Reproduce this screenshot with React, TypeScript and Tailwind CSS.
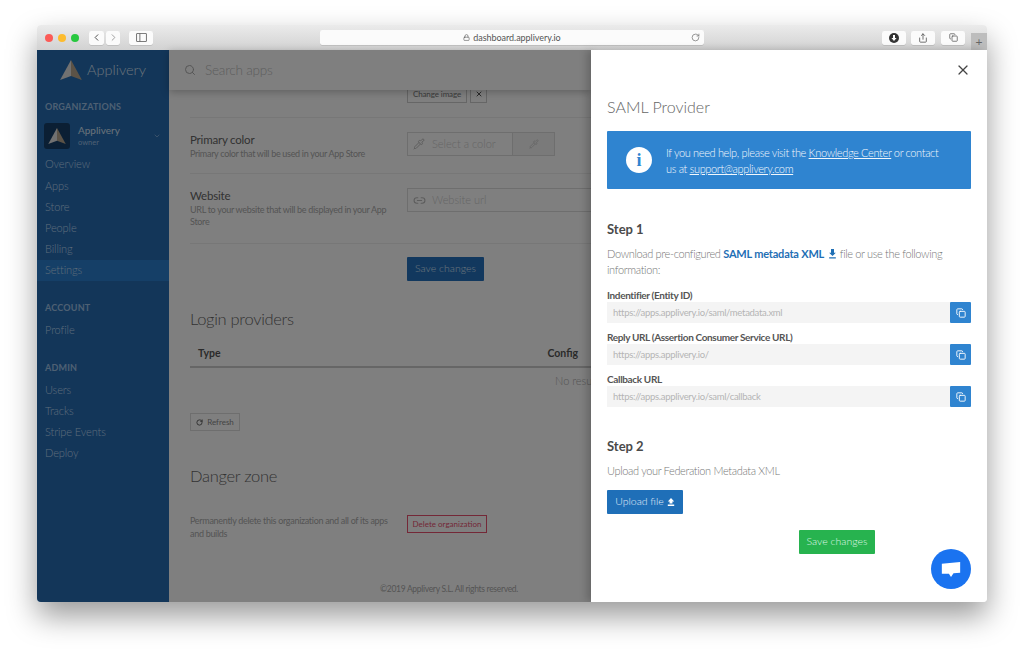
import { ChevronDown, ChevronLeft, ChevronRight, Copy, Link2, Lock, Pipette, RotateCw, Search, Share, X } from 'lucide-react';

const Logo = ({ className }: { className: string }) => (
  <svg viewBox="0 0 24 22" className={className}>
    <path d="M12 0 L0 22 L12 17.5 Z" fill="#e2e2e2" />
    <path d="M12 0 L24 22 L12 17.5 Z" fill="#b9a78e" />
  </svg>
);

const NavItem = ({ label, active }: { label: string; active?: boolean }) => (
  <div className={`flex h-[21.2px] items-center pl-2 text-[11px] font-light tracking-[-0.1px] text-[#bcd8f2] ${active ? 'bg-[#2b7fce]' : ''}`}>{label}</div>
);

const NavTitle = ({ label, className }: { label: string; className: string }) => (
  <div className={`pl-2 text-[9px] font-bold uppercase leading-[12px] tracking-[0.2px] text-[#9cc0e6] ${className}`}>{label}</div>
);

const DownIcon = () => (
  <svg viewBox="0 0 10 12" className="ml-1 inline-block h-[10px] w-[9px] align-[-1px]" fill="#1f6fb5">
    <path d="M3.2 0h3.6v4.5H9L5 8.5 1 4.5h2.2zM1 10h8v1.4H1z" />
  </svg>
);

const Field = ({ label, value }: { label: string; value: string }) => (
  <div className="mb-[7px]">
    <div className="h-[14px] text-[10px] font-bold leading-[15px] tracking-[-0.35px] text-[#555]">{label}</div>
    <div className="flex h-[21px]">
      <div className="flex flex-1 items-center bg-[#f4f4f4] pl-[6px] pt-[1px] text-[9.5px] tracking-[-0.3px] text-[#b4b4b4]">{value}</div>
      <div className="flex w-[21px] items-center justify-center rounded-[1px] bg-[#2f84d0]">
        <Copy className="h-[10px] w-[10px] text-white" strokeWidth={2.2} />
      </div>
    </div>
  </div>
);

function Sidebar() {
  return (
    <div className="flex w-[132px] shrink-0 flex-col bg-[#266cb2]">
      <div className="flex h-[40px] items-center pl-[23px]">
        <Logo className="h-[20px] w-[22px]" />
        <span className="ml-[5px] text-[14.5px] font-light text-[#d5e4f2]">Applivery</span>
      </div>
      <NavTitle label="Organizations" className="mt-[11px]" />
      <div className="mt-[10px] flex h-[26px] items-center pl-[7px] pr-[8px]">
        <div className="flex h-[26px] w-[26px] items-center justify-center rounded-[3px] bg-[#173f69]">
          <Logo className="h-[16px] w-[18px]" />
        </div>
        <div className="ml-[8px] flex-1">
          <div className="text-[10px] leading-[13px] text-[#d5e4f2]">Applivery</div>
          <div className="text-[7.5px] leading-[12px] text-[#9cc0e6]">owner</div>
        </div>
        <ChevronDown className="h-[8px] w-[8px] text-[#9cc0e6]" />
      </div>
      <div className="mt-[5px]">
        {['Overview', 'Apps', 'Store', 'People', 'Billing'].map(l => <NavItem key={l} label={l} />)}
        <NavItem label="Settings" active />
      </div>
      <NavTitle label="Account" className="mt-[21px]" />
      <div className="mt-[6px]"><NavItem label="Profile" /></div>
      <NavTitle label="Admin" className="mt-[21px]" />
      <div className="mt-[5px]">
        {['Users', 'Tracks', 'Stripe Events', 'Deploy'].map(l => <NavItem key={l} label={l} />)}
      </div>
    </div>
  );
}

function MainContent() {
  return (
    <div className="flex min-w-0 flex-1 flex-col bg-white">
      <div className="z-10 flex h-[40px] shrink-0 items-center bg-white pl-[15px] shadow-[0_2px_8px_rgba(0,0,0,0.25)]">
        <Search className="h-[12px] w-[12px] text-[#aaa]" />
        <span className="ml-[9px] text-[13.5px] font-light tracking-[-0.2px] text-[#bbb]">Search apps</span>
      </div>
      <div className="min-h-0 flex-1 overflow-hidden pl-[21px]">
        <div className="ml-[217px] flex h-[13px] items-end gap-[3px]">
          <div className="flex h-[18px] w-[60px] shrink-0 items-center justify-center border border-[#ccc] text-[8px] tracking-[-0.1px] text-[#777]">Change image</div>
          <div className="flex h-[18px] w-[17px] shrink-0 items-center justify-center border border-[#ccc]"><X className="h-[8px] w-[8px] text-[#555]" strokeWidth={3} /></div>
        </div>
        <div className="mt-[14px] flex h-[56px] border-t border-[#eee] pt-[14px]">
          <div className="w-[217px] shrink-0">
            <div className="text-[11.5px] leading-[16px] tracking-[-0.2px] text-[#666]">Primary color</div>
            <div className="text-[9px] leading-[12px] tracking-[-0.3px] text-[#aaa]">Primary color that will be used in your App Store</div>
          </div>
          <div className="flex h-[24px] w-[148px] border border-[#ddd]">
            <div className="flex flex-1 items-center pl-[5px] text-[11px] font-light text-[#ccc]">
              <Pipette className="mr-[7px] h-[12px] w-[12px] text-[#bbb]" />Select a color
            </div>
            <div className="flex w-[42px] items-center justify-center border-l border-[#ddd] bg-[#f4f4f4]"><Pipette className="h-[10px] w-[10px] text-[#ccc]" /></div>
          </div>
        </div>
        <div className="flex h-[70px] border-t border-[#eee] pt-[14px]">
          <div className="w-[217px] shrink-0 pr-[4px]">
            <div className="text-[11.5px] leading-[16px] tracking-[-0.2px] text-[#666]">Website</div>
            <div className="text-[9px] leading-[12px] tracking-[-0.3px] text-[#aaa]">URL to your website that will be displayed in your App Store</div>
          </div>
          <div className="flex h-[24px] flex-1 items-center border border-r-0 border-[#ddd] pl-[5px] text-[11px] font-light text-[#ccc]">
            <Link2 className="mr-[6px] h-[13px] w-[13px] text-[#bbb]" />Website url
          </div>
        </div>
        <div className="border-t border-[#eee] pl-[217px] pt-[13px]">
          <div className="flex h-[24px] w-[77px] items-center justify-center rounded-[1px] bg-[#2570bd] text-[10.5px] font-light text-[#d6e6f6]">Save changes</div>
        </div>
        <div className="mt-[26px] text-[16.5px] font-light leading-[24px] tracking-[-0.3px] text-[#666]">Login providers</div>
        <div className="mt-[10px] flex h-[27px] items-center justify-between border-b-2 border-[#ccc] pl-[8px] text-[10.5px] font-bold text-[#555]">
          <span>Type</span>
          <span className="mr-[13px]">Config</span>
        </div>
        <div className="mt-[6px] h-[14px] overflow-hidden whitespace-nowrap pl-[365px] text-[11px] font-light leading-[14px] text-[#aaa]">No results</div>
        <div className="mt-[25px] flex h-[18px] w-[50px] items-center justify-center gap-[4px] border border-[#ddd] text-[8px] text-[#888]">
          <RotateCw className="h-[7px] w-[7px] text-[#555]" strokeWidth={3} />Refresh
        </div>
        <div className="mt-[33px] text-[16.5px] font-light leading-[24px] tracking-[-0.3px] text-[#666]">Danger zone</div>
        <div className="mt-[27px] flex">
          <div className="w-[217px] shrink-0 pr-[10px] text-[9px] leading-[12.5px] tracking-[-0.3px] text-[#aaa]">Permanently delete this organization and all of its apps and builds</div>
          <div className="flex h-[18px] w-[80px] items-center justify-center border border-[#e8506f] text-[8px] text-[#e8506f]">Delete organization</div>
        </div>
        <div className="mt-[43px] whitespace-nowrap pl-[190px] text-[8.5px] leading-[12px] tracking-[-0.3px] text-[#aaa]">©2019 Applivery S.L. All rights reserved.</div>
      </div>
    </div>
  );
}

function SamlPanel() {
  return (
    <div className="relative w-[396px] shrink-0 bg-white px-[16px] shadow-[-4px_0_8px_rgba(0,0,0,0.2)]">
      <div className="flex h-[40px] items-center justify-end">
        <X className="h-[16px] w-[16px] text-[#444]" strokeWidth={1.8} />
      </div>
      <div className="mt-[6px] text-[16px] font-light leading-[22px] text-[#666]">SAML Provider</div>
      <div className="mt-[13px] flex h-[58px] items-center rounded-[1px] bg-[#2f84d0] pl-[19px]">
        <div className="flex h-[26px] w-[26px] shrink-0 items-center justify-center rounded-full bg-white font-['Liberation_Serif',serif] text-[18px] font-bold text-[#2f84d0]">i</div>
        <div className="ml-[14px] w-[284px] pt-[2px] text-[11px] font-light leading-[16px] tracking-[-0.35px] text-[#f2f7fc]">
          If you need help, please visit the <span className="underline">Knowledge Center</span> or contact us at <span className="underline">support@applivery.com</span>
        </div>
      </div>
      <div className="mt-[31px] text-[13px] font-bold leading-[18px] text-[#4a4a4a]">Step 1</div>
      <div className="mt-[8px] text-[11px] font-light leading-[16px] tracking-[-0.35px] text-[#777]">
        Download pre-configured <span className="font-bold tracking-[-0.2px] text-[#1f6fb5]">SAML metadata XML<DownIcon /></span> file or use the following information:
      </div>
      <div className="mt-[10px]">
        <Field label="Indentifier (Entity ID)" value="https://apps.applivery.io/saml/metadata.xml" />
        <Field label="Reply URL (Assertion Consumer Service URL)" value="https://apps.applivery.io/" />
        <Field label="Callback URL" value="https://apps.applivery.io/saml/callback" />
      </div>
      <div className="mt-[30px] text-[13px] font-bold leading-[18px] text-[#4a4a4a]">Step 2</div>
      <div className="mt-[8px] text-[11px] font-light leading-[16px] tracking-[-0.35px] text-[#777]">Upload your Federation Metadata XML</div>
      <div className="mt-[11px] flex h-[24px] w-[76px] items-center justify-center rounded-[1px] bg-[#1f6fb8] text-[10.5px] font-light text-[#e3eef8]">
        Upload file
        <svg viewBox="0 0 10 10" className="ml-[3px] h-[8px] w-[8px]" fill="#fff"><path d="M5 0 9 4.4H6.8V7H3.2V4.4H1zM1 8.2h8V10H1z" /></svg>
      </div>
      <div className="ml-[192px] mt-[16px] flex h-[24px] w-[76px] items-center justify-center rounded-[1px] bg-[#27b34f] text-[10.5px] font-light text-[#dff5e5]">Save changes</div>
      <div className="absolute bottom-[13px] right-[16px] flex h-[40px] w-[40px] items-center justify-center rounded-full bg-[#1a73f0]">
        <svg viewBox="0 0 24 20" className="h-[17px] w-[20px]" fill="#fff"><path d="M1 3 23 1v13l-8 .6L12 19l-2.5-4H1z" /></svg>
      </div>
    </div>
  );
}

function TitleBar() {
  const btn = 'flex h-[14px] items-center justify-center rounded-[2px] bg-[#fbfbfb] shadow-[0_0.5px_0.5px_rgba(0,0,0,0.2)]';
  return (
    <div className="flex h-[25px] items-center bg-gradient-to-b from-[#ebebeb] to-[#d2d2d2] pl-[8px]">
      <span className="h-[8px] w-[8px] rounded-full bg-[#fc5b57]" />
      <span className="ml-[5px] h-[8px] w-[8px] rounded-full bg-[#fdbc2e]" />
      <span className="ml-[5px] h-[8px] w-[8px] rounded-full bg-[#28c83f]" />
      <div className={`${btn} ml-[10px] w-[15px]`}><ChevronLeft className="h-[11px] w-[11px] text-[#444]" /></div>
      <div className={`${btn} ml-[2px] w-[14px]`}><ChevronRight className="h-[11px] w-[11px] text-[#999]" /></div>
      <div className={`${btn} ml-[9px] w-[24px]`}>
        <svg viewBox="0 0 12 10" className="h-[9px] w-[11px]" fill="none" stroke="#666"><rect x="0.5" y="0.5" width="11" height="9" rx="0.5" /><path d="M4.2 0.5v9" /></svg>
      </div>
      <div className={`${btn} relative ml-[167px] h-[15px] w-[384px] text-[9px] tracking-[-0.05px] text-[#555]`}>
        <Lock className="mr-[3px] h-[7px] w-[7px] text-[#555]" />dashboard.applivery.io
        <RotateCw className="absolute right-[4px] h-[9px] w-[9px] text-[#777]" />
      </div>
      <div className={`${btn} ml-[178px] w-[24px]`}>
        <svg viewBox="0 0 10 10" className="h-[10px] w-[10px]"><circle cx="5" cy="5" r="5" fill="#333" /><path d="M4 2h2v3h1.6L5 8 2.4 5H4z" fill="#fff" /></svg>
      </div>
      <div className={`${btn} ml-[5px] w-[24px]`}><Share className="h-[10px] w-[10px] text-[#555]" /></div>
      <div className={`${btn} ml-[6px] w-[24px]`}><Copy className="h-[9px] w-[9px] text-[#555]" /></div>
      <div className="ml-[6px] flex h-[17px] w-[16px] self-end items-center justify-center bg-[#bdbdbd] text-[12px] leading-none text-[#666]">+</div>
    </div>
  );
}

export default function App() {
  return (
    <div className="h-[651px] w-[1024px] overflow-hidden bg-white pl-[37px] pt-[25px] font-['Lato','Open_Sans',sans-serif]">
      <div className="flex h-[577px] w-[950px] flex-col overflow-hidden rounded-[4px] shadow-[0_14px_30px_rgba(0,0,0,0.4)]">
        <TitleBar />
        <div className="flex min-h-0 flex-1">
          <div className="relative flex w-[554px] shrink-0">
            <Sidebar />
            <MainContent />
            <div className="absolute inset-0 z-20 bg-black/50" />
          </div>
          <div className="z-30 flex"><SamlPanel /></div>
        </div>
      </div>
    </div>
  );
}
